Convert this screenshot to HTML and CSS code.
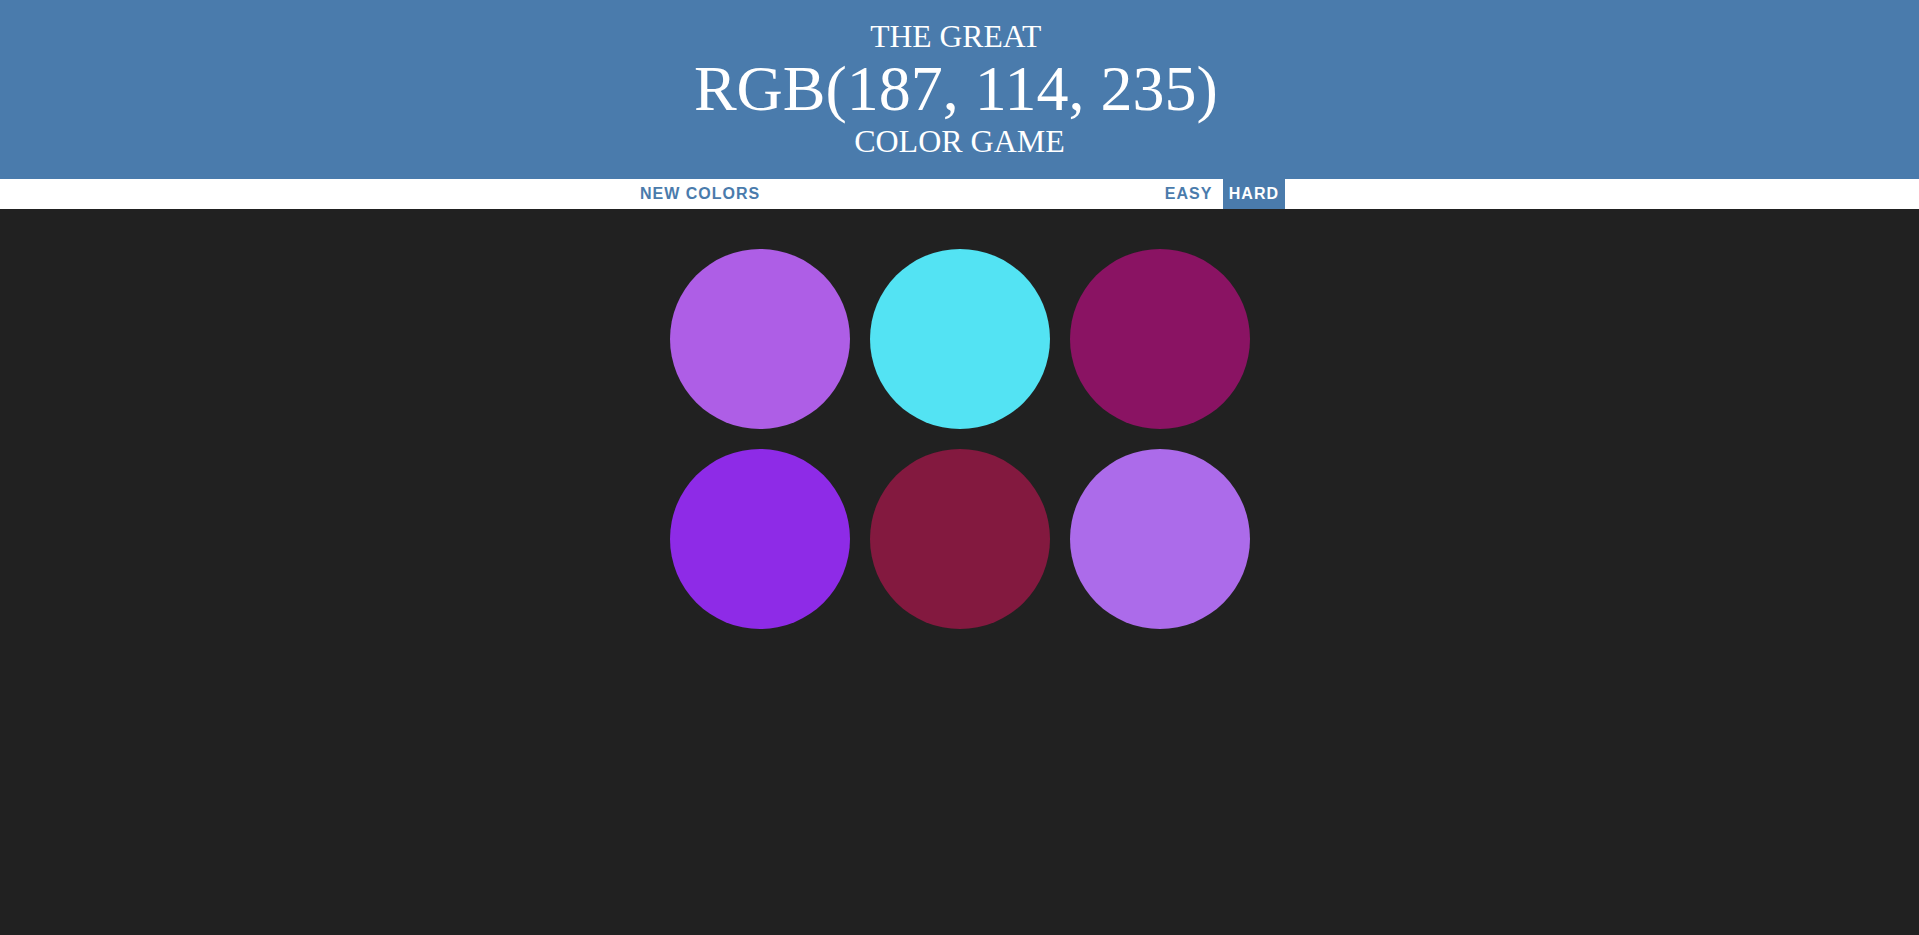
FILE: index.html
```html
<!DOCTYPE html>
<html lang="en">
<head>
<meta charset="utf-8">
<title>Color Game</title>
<link rel="stylesheet" href="styles.css">
</head>
<body>
<h1 class="title">
  <span class="title-line title-top">The Great</span>
  <span class="title-line color-display">RGB(187, 114, 235)</span>
  <span class="title-line title-bottom">Color Game</span>
</h1>
<div class="stripe">
  <button class="btn">New Colors</button>
  <span class="message"></span>
  <button class="btn">Easy</button>
  <button class="btn selected">Hard</button>
</div>
<div class="board">
  <div class="square sq1"></div>
  <div class="square sq2"></div>
  <div class="square sq3"></div>
  <div class="square sq4"></div>
  <div class="square sq5"></div>
  <div class="square sq6"></div>
</div>
</body>
</html>
```
FILE: styles.css
```css
html {
  background: #212121;
}
body {
  margin: 0;
  background: #212121;
  min-height: 100vh;
}
.title {
  margin: 0;
  padding: 18.5px 0 20.1px;
  background: #4a7bac;
  color: #ffffff;
  font-family: "Liberation Serif", "Times New Roman", serif;
  font-weight: normal;
  font-size: 32px;
  line-height: 35.2px;
  text-align: center;
  text-transform: uppercase;
}
.title-line {
  display: block;
}
.title-top {
  font-size: 31.6px;
  padding-right: 7.4px;
}
.color-display {
  font-size: 64px;
  line-height: 70px;
  padding-right: 7.4px;
}
.title-bottom {
  font-size: 32px;
}
.stripe {
  display: flex;
  justify-content: center;
  gap: 4.4px;
  height: 30px;
  background: #ffffff;
}
.message {
  width: 20%;
}
.btn {
  height: 100%;
  margin: 0;
  padding: 0 6px;
  border: none;
  background: none;
  color: #4a7bac;
  font-family: "Liberation Sans", Arial, sans-serif;
  font-size: 16px;
  font-weight: 700;
  letter-spacing: 1px;
  text-transform: uppercase;
}
.btn.selected {
  background: #4a7bac;
  color: #ffffff;
}
.board {
  width: 600px;
  box-sizing: border-box;
  margin: 30px auto 0;
  padding: 10px;
  display: grid;
  grid-template-columns: repeat(3, 180px);
  grid-auto-rows: 180px;
  gap: 20px;
}
.square {
  border-radius: 50%;
}
.sq1 { background: #ae5ee6; }
.sq2 { background: #53e3f3; }
.sq3 { background: #8a1363; }
.sq4 { background: #8e2be7; }
.sq5 { background: #83193f; }
.sq6 { background: #ac6bea; }
```
